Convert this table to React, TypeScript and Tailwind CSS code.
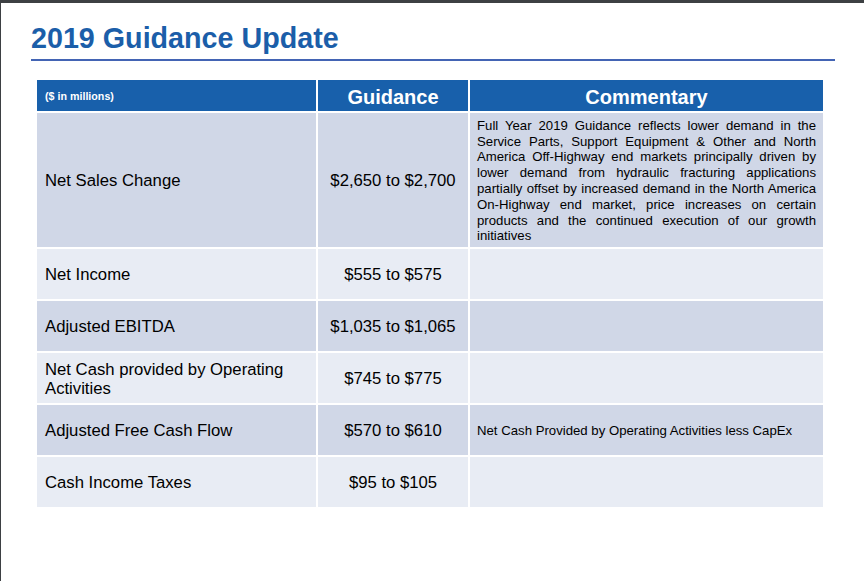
const rows = [
  {
    label: "Net Sales Change",
    value: "$2,650 to $2,700",
    note: "Full Year 2019 Guidance reflects lower demand in the Service Parts, Support Equipment & Other and North America Off-Highway end markets principally driven by lower demand from hydraulic fracturing applications partially offset by increased demand in the North America On-Highway end market, price increases on certain products and the continued execution of our growth initiatives",
    tall: true,
  },
  { label: "Net Income", value: "$555 to $575" },
  { label: "Adjusted EBITDA", value: "$1,035 to $1,065" },
  { label: "Net Cash provided by Operating Activities", value: "$745 to $775" },
  {
    label: "Adjusted Free Cash Flow",
    value: "$570 to $610",
    note: "Net Cash Provided by Operating Activities less CapEx",
  },
  { label: "Cash Income Taxes", value: "$95 to $105" },
];

export default function App() {
  return (
    <div
      className="h-[581px] w-[864px] overflow-hidden border-t-[3px] border-l border-[#3d4043] bg-white"
      style={{ fontFamily: '"Liberation Sans", Arial, sans-serif' }}
    >
      <div className="ml-[30px] mt-[19px] w-[804px]">
        <h1 className="text-[28.7px] font-bold leading-[33px] text-[#1b5ea9]">
          2019 Guidance Update
        </h1>
        <div className="mt-[4px] h-[2px] bg-[#4364b4]" />
      </div>

      <div className="ml-[36px] mt-[19px] grid w-[786px] grid-cols-[279px_150px_1fr] gap-[2px]">
        <div className="flex h-[31px] items-center bg-[#1860ab] pl-[8px] pt-[2px] text-[10.7px] font-bold text-white">
          ($ in millions)
        </div>
        <div className="flex h-[31px] items-center justify-center bg-[#1860ab] pt-[2px] text-[20px] font-bold text-white">
          Guidance
        </div>
        <div className="flex h-[31px] items-center justify-center bg-[#1860ab] pt-[2px] text-[20px] font-bold text-white">
          Commentary
        </div>

        {rows.map((row, i) => {
          const bg = i % 2 === 0 ? "bg-[#d0d7e7]" : "bg-[#e8ecf4]";
          const h = row.tall ? "h-[134px]" : "h-[50px]";
          return (
            <div key={row.label} className="contents">
              <div
                className={`${bg} ${h} flex items-center pl-[8px] pr-[10px] pt-[1px] text-[16.7px] leading-[19px] text-black`}
              >
                {row.label}
              </div>
              <div
                className={`${bg} ${h} flex items-center justify-center pt-[1px] text-[16.7px] text-black`}
              >
                {row.value}
              </div>
              <div
                className={`${bg} ${h} flex items-center pl-[7px] pr-[7px] pt-[2px] text-[13.2px] leading-[15.8px] text-black`}
              >
                {row.note && (
                  <p className={row.tall ? "text-justify" : ""}>{row.note}</p>
                )}
              </div>
            </div>
          );
        })}
      </div>
    </div>
  );
}
